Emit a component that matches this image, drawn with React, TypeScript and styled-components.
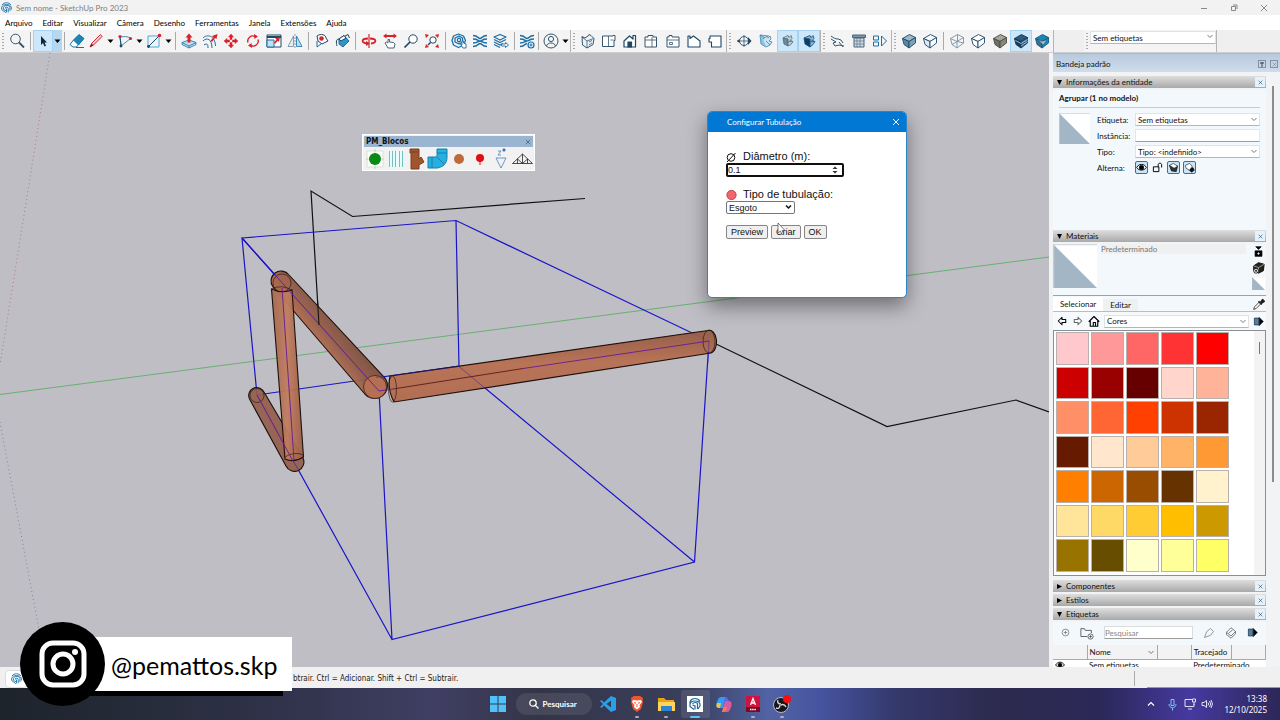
import React from "react";
import styled, { createGlobalStyle, css } from "styled-components";

const UI = `Lato, "Noto Sans", sans-serif`;
const SEGOE = `"Noto Sans", "Open Sans", sans-serif`;
const TAHOMA = `"DejaVu Sans Condensed", "DejaVu Sans", sans-serif`;
const NAVY = "#1f4766";
const BLUE = "#1c6ea4";
const RED = "#d8222a";

const Global = createGlobalStyle`
  * { box-sizing: border-box; }
  body { margin: 0; background: #f0f0f0; }
  button, input, select { font: inherit; color: inherit; margin: 0; padding: 0; }
  svg { display: block; flex: none; }
`;

/* ---------- window frame ---------- */

const Shell = styled.div`
  position: relative;
  display: flex;
  flex-direction: column;
  height: 100vh;
  overflow: hidden;
  font: 8px/12px ${UI};
  color: #111;
`;

const TitleBar = styled.header`
  display: flex;
  align-items: center;
  gap: 4px;
  height: 15px;
  padding: 0 10px 0 1px;
  background: #f2f2f2;
  color: #808080;
`;

const WindowTitle = styled.h1`
  margin: 0;
  flex: 1;
  font-size: 8px;
  font-weight: 400;
`;

const PlainButton = styled.button`
  display: flex;
  align-items: center;
  justify-content: center;
  border: 0;
  background: transparent;
`;

const WindowButtons = styled.div`
  display: flex;
  gap: 18px;
  & > button { width: 12px; height: 14px; }
`;

const MenuBar = styled.nav`
  display: flex;
  align-items: center;
  gap: 10px;
  height: 15px;
  padding-left: 5px;
  background: #fff;
  a { color: #000; text-decoration: none; }
`;

const ToolbarRow = styled.div`
  display: flex;
  height: 23px;
  background: #efefef;
  border-bottom: 1px solid #cfcfcf;
`;

const ToolGroup = styled.div`
  display: flex;
  align-items: center;
  background: #f4f4f4;
  border-right: 1px solid #b4b4b4;
`;

const Grip = styled.div`
  width: 6px;
  height: 18px;
  background: radial-gradient(circle, #a8a8a8 40%, transparent 50%) 2px 0 / 2px 3px repeat-y;
`;

const ToolSet = styled.div<{ $w: number }>`
  display: flex;
  width: ${(p) => p.$w}px;
  height: 22px;
`;

const Tool = styled(PlainButton)<{ $on?: boolean }>`
  flex: 1;
  min-width: 0;
  height: 22px;
  ${(p) => p.$on && css`background: #cce6fa; box-shadow: inset 0 0 0 1px #a6d2f2;`}
`;

const DropTool = styled(PlainButton)<{ $on?: boolean }>`
  width: 9px;
  height: 22px;
  ${(p) => p.$on && css`background: #b5d7f0;`}
`;

const Divider = styled.div`
  width: 1px;
  height: 18px;
  margin: 0 2px;
  background: #a9a9a9;
`;

const ToolbarGap = styled.div`
  width: 30px;
`;

const SelectBox = styled.div<{ $w?: number }>`
  position: relative;
  ${(p) => (p.$w ? `width: ${p.$w}px; align-self: flex-start; padding-top: 1px;` : "flex: 1; min-width: 0;")}
  display: flex;
  svg { position: absolute; right: 2px; top: 3px; pointer-events: none; }
`;

const Select = styled.select`
  appearance: none;
  width: 100%;
  height: 13px;
  && { padding: 0 12px 0 2px; }
  border: 1px solid #e2e2e2;
  border-bottom-color: #b5b5b5;
  border-radius: 0;
  background: #fff;
`;

/* ---------- icons ---------- */

const Ico = ({ children, s = 16, c = NAVY, w = 1 }: { children: React.ReactNode; s?: number; c?: string; w?: number }) => (
  <svg width={s} height={s} viewBox="0 0 16 16" fill="none" stroke={c} strokeWidth={w} strokeLinejoin="round" aria-hidden>
    {children}
  </svg>
);

const Tri = () => (
  <svg width="7" height="5" viewBox="0 0 7 5" aria-hidden><path d="M.5 .5h6L3.500 4z" fill="#000" /></svg>
);
const Chevron = () => (
  <svg width="8" height="7" viewBox="0 0 8 7" fill="none" stroke="#777" aria-hidden><path d="M1.500 2L4 4.500 6.500 2" /></svg>
);
const Cross = ({ c = "#888", s = 8 }: { c?: string; s?: number }) => (
  <svg width={s} height={s} viewBox="0 0 8 8" stroke={c} aria-hidden><path d="M1 1l6 6M7 1L1 7" /></svg>
);
const Logo = ({ s = 11 }: { s?: number }) => (
  <svg width={s} height={s} viewBox="0 0 16 16" fill="none" stroke="#1f78ae" strokeWidth="1.400" aria-hidden>
    <path d="M1.500 4.500c3-4.500 10-4.500 13 0M1 7.500c2-5 12-5 14 0V11M3.500 8c1-4 9-4 9.500 0v5M1 7.500V11l6 4.500M3.500 8v2.500L7.500 13M6 8.500c1-2 4.500-1 4.500 1V15M6 8.500l2 1.500v5" />
  </svg>
);

const Cube = ({ top, left, right, line = NAVY }: { top: string; left: string; right: string; line?: string }) => (
  <Ico c={line} w={0.9}>
    <path d="M1.500 5.500L8.500 1.500l6 3-6.500 4z" fill={top} />
    <path d="M1.500 5.500L8 8.500V15l-5-3.500z" fill={left} />
    <path d="M8 8.500l6.500-4V10L8 15z" fill={right} />
  </Ico>
);

const ICONS: Record<string, React.ReactNode> = {
  search: <Ico c="#35566e"><circle cx="6.500" cy="6" r="4.800" /><path d="M10 9.500l5 5" strokeWidth="1.800" /></Ico>,
  cursor: <Ico><path d="M6 3v9l2-2 1.500 3.500 1.500-.7L9.500 9.500H12z" fill="#12263a" stroke="none" /></Ico>,
  eraser: <Ico><path d="M4.500 7L10 1.500l5 4L9.500 12z" fill="#1c86b8" stroke={BLUE} /><path d="M4.500 7l5 5-2.500 2H4l-3-2.500z" fill="#fff" stroke={BLUE} /><path d="M7 14.500h8" stroke={BLUE} /></Ico>,
  pencil: <Ico><path d="M2 14l2-4 8.500-8.500 1.500 2L5.500 12z" fill="#f3cfcf" stroke={RED} /><path d="M2 14l1.500-3.500 2 2z" fill="#7a1a1a" stroke="none" /></Ico>,
  arc: <Ico><path d="M3 4c5-1 10 0 10.500 1.500L4 13z" stroke={BLUE} strokeWidth=".8" /><path d="M4 13C4 9 3 6 3 4" /><circle cx="3" cy="3.500" r="1.600" fill={RED} stroke="none" /><circle cx="13.500" cy="5.500" r="1.600" fill={RED} stroke="none" /><circle cx="4" cy="13" r="1.400" fill={NAVY} stroke="none" /></Ico>,
  rect: <Ico><path d="M2 3h11v11H2z" fill="#eaf6fc" stroke="#57a6cf" /><path d="M2 14L13 3" /><circle cx="13.500" cy="2.500" r="1.800" fill={RED} stroke="none" /><circle cx="2.500" cy="13.500" r="1.400" fill={NAVY} stroke="none" /></Ico>,
  push: <Ico><path d="M1 9.500L8 7l7 2.500v2L8 15l-7-3.500z" fill="#bfe0f0" stroke={BLUE} strokeWidth=".8" /><path d="M1 9.500L8 13l7-3.500M8 13v2" stroke={BLUE} strokeWidth=".8" /><path d="M8 .5L11.500 4.500H9.500v5h-3v-5h-2z" fill={RED} stroke="none" /></Ico>,
  offset: <Ico><path d="M1 8c4-4 9-2 9 7M1 5c4-4 12-3 12.500 8M2 12c3-2 4-1 4 3" stroke={BLUE} /><path d="M15.500 1l-1 5-1.500-1L10 9 8.500 7.500l3-3L10 3z" fill={RED} stroke="none" /></Ico>,
  move: <Ico><path d="M8 1l2.500 3H9v2.500H7V4H5.500zM8 15l2.500-3H9V9.500H7V12H5.500zM1 8l3-2.500V7h2.500v2H4v1.500zM15 8l-3-2.500V7H9.500v2H12v1.500z" fill={RED} stroke={RED} strokeWidth=".5" /></Ico>,
  rotate: <Ico c={RED} w={1.4}><path d="M3 9.500a5 5 0 0 1 7-6M13 6.500a5 5 0 0 1-7 6" /><path d="M9 1l4 2.500L9.500 6zM7 15l-4-2.500L6.500 10z" fill={RED} stroke="none" /></Ico>,
  scale: <Ico><path d="M1 2h14v12H1z" fill="#fff" /><path d="M1 4h14" strokeWidth="2" /><path d="M1 7h7v7H1z" fill="#bfe3f3" stroke={BLUE} /><path d="M14 4l-1 5-1.300-1.200L9 11 8 9.500l2.500-3L9 5z" fill={RED} stroke="none" /></Ico>,
  flip: <Ico w={0.8}><path d="M6.500 3v10.500H1z" stroke="#70879a" fill="#e6edf2" /><path d="M9.500 3v10.500H15z" stroke={BLUE} fill="#b8dff0" /><path d="M8 1v14" stroke="#70879a" strokeDasharray="2 1" /></Ico>,
  tape: <Ico><path d="M3 3c4-3 9-1 9 2l2 3-6 3-4-3z" fill="#fff" /><circle cx="7.500" cy="5.500" r="2.300" fill={RED} stroke="none" /><path d="M3 8v6l4-3" stroke={BLUE} /></Ico>,
  paint: <Ico><path d="M4 6l5-3.500L14 8l-6 6-4-3z" fill="#2f95c7" stroke={BLUE} /><path d="M4 6l5-3.500L11 5 6 8z" fill="#fff" /><path d="M4 6C1 6 1 9 2 13M10 3l3-1.500L14.500 5" /></Ico>,
  orbit: <Ico c={RED} w={1.8}><path d="M7 5.500C0 5.500 0 10 6 10.500M9 5.500c7 0 7 4.500 1 5" /><path d="M8 1v14" strokeWidth="1.200" /><path d="M5 8l4 2.500L5 13z" fill={RED} stroke="none" /></Ico>,
  pan: <Ico c="#35566e" w={0.9}><path d="M6 15l-3-5 1.500-1L6 10V6.500h1.500V9l4 .5 1.500 1.500-1 4z" fill="#fff" /><path d="M1 3l3.500-2.500V2h7V.5L15 3l-3.500 2.500V4h-7v1.500z" fill={RED} stroke="none" /></Ico>,
  glass: <Ico><circle cx="10" cy="6" r="4.200" fill="#fff" /><path d="M7 9l-5.500 5.500" strokeWidth="1.700" /></Ico>,
  extents: <Ico><circle cx="9" cy="7" r="3.200" fill="#fff" /><path d="M6.500 9.500L4 12" strokeWidth="1.500" /><path d="M1 1l4 1-3 3zM15 1l-1 4-3-3zM15 15l-4-1 3-3zM1 15l1-4 3 3z" fill={RED} stroke="none" /></Ico>,
  ware: <Ico c={BLUE} w={1.3}><path d="M7.500 1l5 2 2 4.500-2 4.500-5 2.500-5-2.500-1.500-4.500 1.500-4.500zM4 5l4-2 3.500 2v4L8 11 4 9zM6.500 6l1.500-1 1.500 1v2L8 9 6.500 8z" /><path d="M11 8v4l-1.500-1L12 15h3v-4l-2.500-1V8z" fill="#fff" strokeWidth=".9" /></Ico>,
  ext: <Ico c={BLUE} w={1.6}><path d="M1 2.500c5 0 5 3 7 3s2-3 7-3M1 6c5 0 5 2 7 2s2-2 7-2M1 13.500c5 0 5-3 7-3s2 3 7 3M1 10c5 0 5-2 7-2s2 2 7 2" /></Ico>,
  layers: <Ico c={BLUE} w={1.3}><path d="M1 4l6-2.500L13 4 7 7zM1 6.500L7 9.500l6-3M1 9L7 12l3-1.500M1 11.500L7 14.500" /><path d="M8.500 11h4V9.500l3 2.500-3 2.500V13h-4z" fill="#fff" strokeWidth=".9" /></Ico>,
  extgear: <Ico c={BLUE} w={1.6}><path d="M1 2.500c5 0 5 3 7 3s2-3 7-3M1 6c5 0 5 2 7 2s2-2 7-2M1 13.500c5 0 5-3 7-3M1 10c5 0 5-2 7-2" /><circle cx="12" cy="12" r="3" fill="#e8f3fa" strokeWidth="1.200" /><circle cx="12" cy="12" r="1" strokeWidth="1" /></Ico>,
  user: <Ico c="#35566e"><circle cx="8" cy="8" r="7" /><circle cx="8" cy="6" r="2.600" /><path d="M3.500 13c1-4 8-4 9 0" /></Ico>,
  iso: <Ico c="#35566e"><path d="M2 3.500l3 1.500 3-2 1-1.500 2 1 3 3-1 6-6 3.500-4.500-3z" fill="#eef3f7" /><path d="M2 4l5 4v7M7 8l6.500-2.500M9 9l3-1.500M9 12l3-2" strokeWidth=".8" /></Ico>,
  plan: <Ico c="#35566e"><path d="M1.500 3h10.500V2.500h2v5h-1v6h-11.500z" fill="#fff" /><path d="M7.500 3v10.500M9.500 7h3" strokeWidth=".8" /></Ico>,
  front: <Ico w={1.2}><path d="M2 14V8l5.500-5L11 6V2.500h2.500V14z" fill="#fff" /><path d="M6 14V9h3.500v5z" fill={NAVY} /></Ico>,
  right: <Ico c="#35566e"><path d="M2 14V4h3V2.500h5V4h3.500v10z" fill="#fff" /><path d="M9 4v10M2 7h11.500" strokeWidth=".8" /></Ico>,
  back: <Ico c="#35566e"><path d="M2 14V4h2V2.500h3V4h7v10z" fill="#fff" /><path d="M2 7h12M4.500 9.500h3v2h-3z" strokeWidth=".8" /></Ico>,
  left: <Ico w={1.1}><path d="M2 14V3h2v2.500L7.500 3 14 8v6z" fill="#fff" /></Ico>,
  bottom: <Ico w={1.1}><path d="M3 3h11v11H4.500V9H2V5.500h1z" fill="#fff" /></Ico>,
  section: <Ico c="#35566e"><circle cx="8" cy="8" r="4.500" /><path d="M1 8h14M8 2v12" strokeWidth=".8" /><path d="M12 4l3.500 4L12 12z" fill={NAVY} stroke="none" /><path d="M3.500 6L1 8l2.500 2z" fill={NAVY} stroke="none" /></Ico>,
  secA: <Ico c="#3e86b0" w={0.8}><path d="M2 2l6 3v9l-5-3z" fill="#8fc3dd" /><path d="M5 6l4-3 1 2 2-2 1 3-2 2 3 1-2 3-4 2" fill="#c9e3f0" /><path d="M2 2l9 1M8 8l4 4" /></Ico>,
  secB: <Ico c="#4d6b7e" w={0.8}><path d="M4 5l5 1v7l-4-2z" fill="#6f8797" /><path d="M4 5l5-2.500 1 2 2-2 1 3-2 2 3 1-2 3-3 1.500V6z" fill="#c2cfd7" /><path d="M9 9l4-1" /></Ico>,
  secC: <Ico c="#0f4a73" w={0.8}><path d="M3 5l6 1v8l-5-3z" fill="#0b3f66" /><path d="M3 5l6-2.500 1 2 2-2 1 3-2 2 3 1-2 3-3 2.500V6z" fill="#8ab6d2" /><path d="M9 9l4-1" /></Ico>,
  hand: <Ico c="#35566e"><path d="M1 3c3 2 4 3 7 3l3 1 2 3M1 6l5 3-3 1 2 3 4-1 5 1M9 9l4 5" /></Ico>,
  panel: <Ico c="#4b667b"><path d="M3 5h10v9H3z" fill="#cfdae2" /><path d="M1.500 2h13v2.500h-13z" fill="#7d95a8" /><path d="M6 5v9M9 5v9M3 8h10M3 11h10" strokeWidth=".6" /></Ico>,
  blocks: <Ico c={BLUE}><path d="M1.500 3h5v4h-5zM1.500 9h5v4h-5zM9.500 3L14.500 8l-5 5z" /></Ico>,
  xray: <Cube top="#9db8c9" left="#5f87a3" right="#7ba0b8" />,
  backedge: <Cube top="#f4f8fa" left="#dfe9ef" right="#fff" />,
  wire: <Ico c="#6c879c" w={0.8}><path d="M1.500 5.500L8.500 1.500l6 3-6.500 4zM1.500 5.500l1.500 6L8 15V8.500M14.500 4.500V10L8 15M8.500 1.500v7L3 11.500M8.500 8.500L14.500 10" /></Ico>,
  hidden: <Cube top="#fff" left="#fff" right="#fff" />,
  shaded: <Cube top="#a7a69a" left="#6f6f66" right="#87867b" line="#4a4a44" />,
  textured: <Ico c="#173a57" w={0.9}><path d="M1.500 5.500L8.500 1.500l6 3-6.500 4z" fill="#2b5c80" /><path d="M1.500 5.500L8 8.500V15l-5-3.500z" fill="#173a57" /><path d="M8 8.500l6.500-4V10L8 15z" fill="#2b5c80" /><path d="M2.500 7.500L8 10.500l6.500-4M8 13l6.500-4.500" stroke="#b6d8ec" strokeWidth=".8" /></Ico>,
  mono: <Ico c="#155a80" w={0.9}><path d="M1.500 5.500L8.500 1.500l6 3-6.500 4z" fill="#1c86b8" /><path d="M1.500 5.500L8 8.500V15l-5-3.500z" fill="#3a6f8f" /><path d="M8 8.500l6.500-4V10L8 15z" fill="#1c86b8" /><path d="M5 7l3 1.500 4-1-3 4z" fill="#d9b98a" stroke="none" /></Ico>,
};

type ToolId = [string, string, boolean?];
const Tools = ({ w, items }: { w: number; items: ToolId[] }) => (
  <ToolSet $w={w}>
    {items.map(([id, label, on]) => (
      <Tool key={id} $on={on} aria-label={label}>{ICONS[id]}</Tool>
    ))}
  </ToolSet>
);
const ToolWithDrop = ({ id, label, on }: { id: string; label: string; on?: boolean }) => (
  <ToolSet $w={29}>
    <Tool $on={on} aria-label={label}>{ICONS[id]}</Tool>
    <DropTool $on={on} aria-label={`${label}: opções`}><Tri /></DropTool>
  </ToolSet>
);

/* ---------- drawing area ---------- */

const Main = styled.main`
  flex: 1;
  min-height: 0;
  display: flex;
`;

const Viewport = styled.section`
  position: relative;
  flex: 1;
  min-width: 0;
  overflow: hidden;
  background: #bfbec5;
  & > svg { width: 100%; height: 100%; }
`;

const Scene = () => (
  <svg viewBox="0 53 1049 614" preserveAspectRatio="xMinYMin slice" fill="none" aria-label="Modelo 3D">
    <defs>
      <linearGradient id="long" x1="0" y1="0" x2=".08" y2="1">
        <stop offset="0" stopColor="#8c5540" /><stop offset=".5" stopColor="#b87052" /><stop offset="1" stopColor="#b06a4c" />
      </linearGradient>
      <linearGradient id="post" x1="0" y1="0" x2="1" y2="0">
        <stop offset="0" stopColor="#a4684f" /><stop offset=".5" stopColor="#c07c5e" /><stop offset="1" stopColor="#9b5d44" />
      </linearGradient>
      <linearGradient id="slope" gradientUnits="userSpaceOnUse" x1="318" y1="340" x2="337" y2="325">
        <stop offset="0" stopColor="#b0694c" /><stop offset=".5" stopColor="#915c49" /><stop offset="1" stopColor="#82503f" />
      </linearGradient>
    </defs>
    <path d="M50 53L0 365" stroke="#b07884" strokeDasharray="1 3" />
    <path d="M0 422L46 667" stroke="#8080a8" strokeDasharray="1 3" />
    <path d="M0 394.500L1049 257" stroke="#5fae68" strokeWidth=".9" />
    <path d="M319 325L311 191l41.500 25.500L585 198.500M714 343l173 83.500L1016 400l33 12" stroke="#111" strokeWidth="1.200" />
    <g stroke="#1a14c8" strokeWidth="1.200">
      <path d="M242 238l214-17.500L709 341 694.500 562 392 639.500 379 391zM456 220.500l3 146L694.500 562M242 238l15 157L392 639.500M257 395l202-29" />
    </g>
    <g stroke="#1c100c" strokeWidth="1.100">
      <path d="M249.500 399l36.500 67a8.500 8.500 0 0 0 17-8l-39-66a8 8 0 0 0-14.500 7z" fill="#925d4b" fillOpacity=".92" />
      <circle cx="257" cy="395.500" r="7" strokeWidth=".6" />
      <path d="M273 287l91 106a12 12 0 0 0 21-15L289 275a9.500 9.500 0 0 0-16 12z" fill="url(#slope)" fillOpacity=".94" />
      <circle cx="375" cy="387" r="11.500" fill="#b56f52" strokeWidth=".6" />
      <circle cx="282" cy="283" r="9" fill="#a5664c" fillOpacity=".6" strokeWidth=".6" />
      <path d="M271.500 289L285 459q9 4 18.500-2L292 290q-10 4-20.500-1z" fill="url(#post)" fillOpacity=".94" />
      <path d="M285 457q9-6 18.500-2M271.500 289q10-5 20.500 1" strokeWidth=".6" />
      <path d="M390 376l318-45.500a7 11.500 0 0 1 3 22.500L394 402q-7-13-4-26z" fill="url(#long)" fillOpacity=".95" />
      <ellipse cx="392.500" cy="389" rx="4" ry="13" strokeWidth=".6" />
      <ellipse cx="709" cy="341.500" rx="6" ry="11.500" strokeWidth=".6" />
      <path d="M393 389l130-20.500" stroke="#5b1a14" strokeWidth=".9" />
    </g>
    <path d="M523 368.500L709 341M242 238l137 153 14-2M257 395l36 66M282 288l12 172" stroke="#6a1a96" strokeWidth=".9" />
    <path d="M242 238l33 37" stroke="#1a14c8" strokeWidth="1.200" />
    <path d="M317.500 300l1.500 25" stroke="#111" />
    <path d="M376 377.500l83-11 72 60M293 461l5 8M709 341l-1 22" stroke="#2018c0" strokeWidth=".8" opacity=".5" />
  </svg>
);

/* floating block palette */

const Palette = styled.aside`
  position: absolute;
  left: 362px;
  top: 81px;
  width: 173px;
  height: 37px;
  padding: 1px;
  background: #f2f2f2;
  border: 1px solid #fff;
`;
const PaletteTitle = styled.div`
  display: flex;
  align-items: center;
  justify-content: space-between;
  height: 11px;
  padding: 0 2px;
  background: #9bb4cf;
  font: bold 8px/11px ${TAHOMA};
`;
const PaletteTools = styled.div`
  display: flex;
  height: 23px;
  & > button { flex: 1; min-width: 0; }
`;

/* pipe dialog */

const Dialog = styled.section`
  position: absolute;
  left: 707px;
  top: 58px;
  width: 200px;
  height: 187px;
  border: 1px solid #2a86c8;
  border-radius: 5px;
  overflow: hidden;
  background: #fff;
  box-shadow: 0 8px 20px rgba(0, 0, 0, 0.42);
`;
const DialogBar = styled.div`
  display: flex;
  align-items: center;
  height: 20px;
  padding: 0 6px 0 19px;
  background: #0078d4;
  color: #fff;
  h2 { flex: 1; margin: 0; font: 400 8px/12px ${UI}; }
`;
const Form = styled.form`
  display: flex;
  flex-direction: column;
  align-items: flex-start;
  padding: 18px;
  font: 11px/13px "Liberation Sans", Arial, sans-serif;
`;
const FieldLabel = styled.label`
  display: flex;
  align-items: center;
  gap: 6px;
`;
const NumberBox = styled.div`
  display: flex;
  align-items: center;
  width: 118px;
  height: 14px;
  margin-bottom: 11px;
  padding-right: 4px;
  border: 2px solid #101010;
  border-radius: 2px;
  input {
    flex: 1;
    min-width: 0;
    border: 0;
    outline: 0;
    background: transparent;
    font-size: 9px;
    line-height: 10px;
    appearance: textfield;
  }
  input::-webkit-inner-spin-button { display: none; }
`;
const KindBox = styled.div`
  position: relative;
  width: 69px;
  height: 13px;
  margin-bottom: 11px;
  select {
    appearance: none;
    display: block;
    width: 100%;
    height: 13px;
    padding: 0 2px;
    border: 1px solid #767676;
    border-radius: 2px;
    background: #fff;
    font-size: 9px;
    line-height: 10px;
  }
  svg { position: absolute; right: 3px; top: 3px; pointer-events: none; }
`;
const Actions = styled.div`
  display: flex;
  gap: 3px;
`;
const FormButton = styled.button`
  height: 14px;
  && { padding: 0 4px; }
  border: 1px solid #868686;
  border-radius: 2px;
  background: #efefef;
  font-size: 9px;
  line-height: 11px;
`;
const Pointer = styled.svg`
  position: absolute;
  left: 69px;
  top: 110px;
`;

/* ---------- tray ---------- */

const Tray = styled.aside`
  width: 231px;
  display: flex;
  flex-direction: column;
  padding-left: 4px;
  background: #f2f3f5;
  line-height: 10px;
  overflow: hidden;
`;
const TrayHeader = styled.div`
  display: flex;
  align-items: center;
  gap: 4px;
  height: 19px;
  padding: 2px 2px 0 3px;
  background: linear-gradient(#b7cade, #cfdceb);
  border-top: 1px solid #a9b8c8;
  span { flex: 1; }
`;
const SmallBox = styled(PlainButton)`
  width: 8px;
  height: 8px;
  border: 1px solid #8492a2;
`;
const TrayBody = styled.div`
  flex: 1;
  min-height: 0;
  display: flex;
  gap: 6px;
  padding-top: 4px;
`;
const Panels = styled.div`
  flex: 1;
  min-width: 0;
  overflow: hidden;
`;
const ScrollRail = styled.div`
  width: 8px;
  padding-top: 10px;
  &::before {
    content: "";
    display: block;
    width: 2px;
    height: 396px;
    background: #8c8c8c;
  }
`;
const PanelHead = styled.div`
  display: flex;
  align-items: center;
  height: 12px;
  margin-bottom: 2px;
  padding: 0 1px 0 4px;
  gap: 4px;
  background: linear-gradient(#dedede, #a9a9a9);
  h3 { flex: 1; margin: 0; font: 400 8px/12px ${UI}; }
  button { width: 10px; height: 10px; background: #e6f2fb; }
`;
const InfoBody = styled.div`
  height: 140px;
  padding: 2px 6px 0;
  background: #f3f8fc;
`;
const EntityTitle = styled.h4`
  margin: 0 0 5px;
  padding-bottom: 2px;
  border-bottom: 1px solid #c8ccd0;
  font: bold 8px/13px ${UI};
`;
const InfoRow = styled.div`
  display: flex;
  gap: 7px;
`;
const Fields = styled.div`
  flex: 1;
  min-width: 0;
  display: flex;
  flex-direction: column;
  gap: 3px;
`;
const Field = styled.div`
  display: flex;
  align-items: center;
  & > label, & > span { width: 38px; }
`;
const TextInput = styled.input`
  flex: 1;
  min-width: 0;
  height: 13px;
  border: 1px solid #e6e6e6;
  border-bottom-color: #9d9d9d;
  background: #fff;
`;
const Toggles = styled.div`
  display: flex;
  gap: 3px;
`;
const Toggle = styled(PlainButton)<{ $on?: boolean }>`
  width: 13px;
  height: 13px;
  ${(p) => p.$on && css`background: #cde6f7; border: 1px solid #30739e; border-radius: 2px;`}
`;
const MaterialTop = styled.div`
  display: flex;
  height: 52px;
  gap: 4px;
  background: #f3f8fc;
  border-bottom: 1px solid #9ea3a8;
`;
const MaterialName = styled.input`
  flex: 1;
  min-width: 0;
  height: 10px;
  border: 0;
  background: #f0f0f0;
  && { color: #777; }
`;
const MaterialTools = styled.div`
  display: flex;
  flex-direction: column;
  width: 16px;
  gap: 2px;
  & > button { height: 14px; }
`;
const TabRow = styled.div`
  display: flex;
  align-items: flex-end;
  height: 16px;
  padding-right: 1px;
  background: #f3f8fc;
  border-bottom: 1px solid #b9bdc2;
  & > span { flex: 1; }
`;
const Tab = styled.button<{ $on?: boolean }>`
  height: ${(p) => (p.$on ? 14 : 12)}px;
  && { padding: 0 7px; }
  border: 0;
  background: ${(p) => (p.$on ? "#fff" : "#eef0f2")};
`;
const NavRow = styled.div`
  display: flex;
  align-items: center;
  gap: 4px;
  height: 18px;
  padding: 0 2px 0 3px;
  background: #f6fafd;
`;
const SwatchList = styled.div`
  display: grid;
  grid-template-columns: repeat(5, 35px);
  grid-template-rows: repeat(7, 1fr);
  height: 246px;
  padding: 1px 0 1px 2px;
  margin-bottom: 4px;
  border: 1px solid #8a8f95;
  background:
    linear-gradient(#777, #777) 205px 11px / 1px 12px no-repeat,
    linear-gradient(90deg, transparent 200px, #f3f3f3 200px);
  background-color: #fff;
`;
const Swatch = styled.button<{ $c: string }>`
  width: 33px;
  border: 1px solid #b9b1ad;
  && { margin-bottom: 2px; }
  background: ${(p) => p.$c};
`;
const TagTools = styled.div`
  display: flex;
  align-items: center;
  height: 23px;
  padding: 0 8px 2px;
  gap: 10px;
  background: #f3f8fc;
`;
const TagSearch = styled.input`
  flex: 1;
  min-width: 0;
  height: 13px;
  border: 1px solid #dcdcdc;
  border-bottom-color: #9c9c9c;
  background: #fff;
  &::placeholder { color: #888; }
`;
const TagTable = styled.table`
  width: 100%;
  border-collapse: collapse;
  table-layout: fixed;
  background: #fff;
  text-align: left;
  th {
    height: 14px;
    padding: 0 2px;
    background: #f3f3f3;
    border-right: 1px solid #a9a9a9;
    border-bottom: 1px solid #a9a9a9;
    font-weight: 400;
    svg { float: right; margin-top: 2px; }
  }
  td { padding: 0 2px; height: 10px; white-space: nowrap; }
`;

const COLORS = [
  "#ffc8cd", "#ff9899", "#ff6666", "#ff3333", "#ff0000",
  "#cc0000", "#990000", "#660000", "#ffd5cc", "#ffb399",
  "#ff8f66", "#ff6633", "#ff4000", "#cc3300", "#992600",
  "#661a00", "#ffe6cc", "#ffcc99", "#ffb366", "#ff9933",
  "#ff8000", "#cc6600", "#994d00", "#663300", "#fff2cc",
  "#ffe599", "#ffd966", "#ffcc33", "#ffbf00", "#cc9900",
  "#997300", "#664d00", "#ffffcc", "#ffff99", "#ffff66",
];

const Sample = ({ s }: { s: number }) => (
  <svg width={s} height={s} viewBox="0 0 30 30" aria-hidden>
    <path d="M0 0h30v30H0z" fill="#fff" /><path d="M0 0l30 30H0z" fill="#a3b6c5" />
    <path d="M.5 30V.5H30" fill="none" stroke="#c8d0d6" strokeWidth=".7" />
  </svg>
);
const Fold = ({ open }: { open?: boolean }) => (
  <svg width="5" height="5" viewBox="0 0 6 6" aria-hidden><path d={open ? "M0 0h6L3 6z" : "M0 0l6 3-6 3z"} fill="#000" /></svg>
);
const Head = ({ title, open }: { title: string; open?: boolean }) => (
  <PanelHead>
    <Fold open={open} />
    <h3>{title}</h3>
    <PlainButton aria-label={`Fechar ${title}`}><Cross c="#2a4866" s={5} /></PlainButton>
  </PanelHead>
);
const Details = () => (
  <Ico s={11} c="#102a44"><path d="M2 3h7v10H2z" fill="#5b7c98" /><path d="M9 2l6 6-6 6z" fill="#000" /></Ico>
);

/* ---------- status and task bars ---------- */

const StatusBar = styled.footer`
  display: flex;
  align-items: center;
  gap: 266px;
  height: 21px;
  padding: 2px 0 0 5px;
  background: #f0f0f0;
  font: 8px/12px ${TAHOMA};
  color: #222;
  & > span { flex: 1; }
`;
const StatusButton = styled(PlainButton)`
  width: 22px;
  height: 18px;
  border: 1px solid #dcdcdc;
  border-radius: 4px;
  background: #fff;
`;
const MeasureBox = styled.div`
  width: 146px;
  height: 15px;
  border-left: 1px solid #aaa;
  padding-left: 12px;
  &::after {
    content: "";
    display: block;
    height: 16px;
    border-bottom: 1px solid #999;
  }
`;
const TaskBar = styled.footer`
  display: grid;
  grid-template-columns: 1fr auto 1fr;
  align-items: center;
  height: 32px;
  background: linear-gradient(90deg, #1d242c 0, #252b38 10%, #30334b 22%, #403f63 34%, #343548 42%, #3a3f5c 54%, #5263a4 60%, #4654a0 64%, #34386b 70%, #2c2a4e 78%, #2b2858 86%, #4639a0 93%, #2c2758 100%);
  color: #fff;
`;
const Apps = styled.div`
  grid-column: 2;
  display: flex;
  align-items: center;
  height: 30px;
`;
const AppButton = styled(PlainButton)<{ $run?: boolean; $active?: boolean }>`
  position: relative;
  width: 29px;
  height: 28px;
  ${(p) => p.$active && css`background: rgba(255, 255, 255, 0.1); border-radius: 3px;`}
  ${(p) => p.$run && css`
    &::after {
      content: "";
      position: absolute;
      bottom: 0;
      width: ${p.$active ? 10 : 4}px;
      height: 2px;
      border-radius: 1px;
      background: ${p.$active ? "#63c0f5" : "#a9adc4"};
    }
  `}
`;
const SearchPill = styled.button`
  display: flex;
  align-items: center;
  gap: 4px;
  width: 76px;
  height: 22px;
  && { padding: 0 13px; margin: 0 2px 0 3px; }
  border: 0;
  border-radius: 11px;
  background: rgba(255, 255, 255, 0.09);
  font: 700 8px/12px ${UI};
  && { color: #fff; }
`;
const SysTray = styled.div`
  grid-column: 3;
  display: flex;
  align-items: center;
  justify-content: flex-end;
  padding-right: 13px;
  gap: 5px;
  & > time { margin-left: 6px; }
`;
const Clock = styled.time`
  text-align: right;
  font: 8px/11px ${SEGOE};
`;

/* social handle laid over the bottom-left corner */

const Handle = styled.a`
  position: absolute;
  left: 20px;
  bottom: 14px;
  display: flex;
  align-items: center;
  height: 84px;
  color: #000;
  text-decoration: none;
`;
const HandleBadge = styled.span`
  display: flex;
  align-items: center;
  justify-content: center;
  width: 85px;
  height: 84px;
  border-radius: 50%;
  background: #000;
  z-index: 1;
`;
const HandleName = styled.span`
  width: 230px;
  height: 54px;
  margin-left: -43px;
  padding-left: 49px;
  background: #fff;
  box-shadow: -9px 5px 0 #000;
  font: 25px/56px Lato, sans-serif;
`;

export default function App() {
  return (
    <Shell>
      <Global />
      <TitleBar>
        <Logo />
        <WindowTitle>Sem nome - SketchUp Pro 2023</WindowTitle>
        <WindowButtons>
          <PlainButton aria-label="Minimizar"><svg width="8" height="8" stroke="#888"><path d="M1 4.500h6" /></svg></PlainButton>
          <PlainButton aria-label="Restaurar"><svg width="8" height="8" fill="none" stroke="#888"><path d="M1.500 2.500h4v4h-4zM3 1h4v4" /></svg></PlainButton>
          <PlainButton aria-label="Fechar"><Cross /></PlainButton>
        </WindowButtons>
      </TitleBar>
      <MenuBar>
        {["Arquivo", "Editar", "Visualizar", "Câmera", "Desenho", "Ferramentas", "Janela", "Extensões", "Ajuda"].map((m) => (
          <a href="#" key={m}>{m}</a>
        ))}
      </MenuBar>
      <ToolbarRow>
        <ToolGroup>
          <Grip />
          <Tools w={22} items={[["search", "Pesquisar"]]} />
          <Divider />
          <ToolWithDrop id="cursor" label="Selecionar" on />
          <Divider />
          <Tools w={19} items={[["eraser", "Borracha"]]} />
          <ToolWithDrop id="pencil" label="Linha" />
          <ToolWithDrop id="arc" label="Arco" />
          <ToolWithDrop id="rect" label="Retângulo" />
          <Divider />
          <Tools w={128} items={[["push", "Empurrar/Puxar"], ["offset", "Equidistância"], ["move", "Mover"], ["rotate", "Rotar"], ["scale", "Escala"], ["flip", "Inverter"]]} />
          <Divider />
          <Tools w={42} items={[["tape", "Fita métrica"], ["paint", "Pintura"]]} />
          <Divider />
          <Tools w={85} items={[["orbit", "Orbitar"], ["pan", "Panorâmica"], ["glass", "Zoom"], ["extents", "Modelo centralizado"]]} />
          <Divider />
          <Tools w={64} items={[["ware", "3D Warehouse"], ["ext", "Extension Warehouse"], ["layers", "LayOut"]]} />
          <Divider />
          <Tools w={19} items={[["extgear", "Gerenciador de extensões"]]} />
          <Divider />
          <ToolWithDrop id="user" label="Conta" />
        </ToolGroup>
        <ToolGroup>
          <Grip />
          <Tools w={149} items={[["iso", "Iso"], ["plan", "Planta"], ["front", "Frente"], ["right", "Direita"], ["back", "Atrás"], ["left", "Esquerda"], ["bottom", "Inferior"]]} />
        </ToolGroup>
        <ToolGroup>
          <Grip />
          <Tools w={87} items={[["section", "Plano de seção"], ["secA", "Exibir planos"], ["secB", "Exibir cortes", true], ["secC", "Preencher cortes", true]]} />
        </ToolGroup>
        <ToolGroup>
          <Grip />
          <Tools w={64} items={[["hand", "Interagir"], ["panel", "Opções"], ["blocks", "Atributos"]]} />
        </ToolGroup>
        <ToolGroup>
          <Grip />
          <Tools w={43} items={[["xray", "Raio X"], ["backedge", "Arestas posteriores"]]} />
          <Divider />
          <Tools w={107} items={[["wire", "Aramado"], ["hidden", "Linhas ocultas"], ["shaded", "Sombreado"], ["textured", "Texturas", true], ["mono", "Monocromático"]]} />
        </ToolGroup>
        <ToolbarGap />
        <ToolGroup>
          <Grip />
          <SelectBox $w={126}>
            <Select aria-label="Etiqueta ativa"><option>Sem etiquetas</option></Select>
            <Chevron />
          </SelectBox>
        </ToolGroup>
      </ToolbarRow>

      <Main>
        <Viewport>
          <Scene />
          <Palette>
            <PaletteTitle>PM_Blocos<Cross c="#3c5878" s={6} /></PaletteTitle>
            <PaletteTools>
              <PlainButton aria-label="Ponto verde"><svg width="18" height="20" viewBox="0 0 18 20"><path d="M1 2h16v16H1z" fill="#fff" stroke="#d7e0d5" /><path d="M9 0v20M0 10h18" stroke="#9fcb9f" strokeWidth=".6" /><circle cx="9" cy="10" r="6" fill="#0a8a14" /></svg></PlainButton>
              <PlainButton aria-label="Tubos"><svg width="16" height="18" fill="none" stroke="#6fc2c0"><path d="M1 1h14v16H1z" fill="#e9fbfb" stroke="none" /><path d="M1.500 1v16M4.500 1v16M7.500 1v16M11.500 1v16M14.500 1v16" /></svg></PlainButton>
              <PlainButton aria-label="Junção"><svg width="17" height="22" viewBox="0 0 17 22"><path d="M2 1h9v10l2-2 3 5-5 3v4H3V5H2z" fill="#a0552f" stroke="#7b3f21" /><path d="M3 4h7" stroke="#7b3f21" /></svg></PlainButton>
              <PlainButton aria-label="Joelho"><svg width="21" height="22" viewBox="0 0 21 22"><path d="M10 1h10v8c0 7-4 10-10 11H1V9h7c2 0 2-1 2-3z" fill="#27afe0" stroke="#1780ad" /><path d="M10 5h10M5 9v11M10 9l7 7" stroke="#1780ad" /></svg></PlainButton>
              <PlainButton aria-label="Ralo"><svg width="12" height="20"><circle cx="6" cy="10" r="5" fill="#bd6a3c" /></svg></PlainButton>
              <PlainButton aria-label="Registro"><svg width="12" height="20"><circle cx="6" cy="9" r="4" fill="#e20d12" /><path d="M6 10v6" stroke="#e20d12" /></svg></PlainButton>
              <PlainButton aria-label="Nível"><svg width="14" height="22" viewBox="0 0 14 22" fill="none" stroke="#4a80b8"><path d="M2 10h10L7 20zM4 3h3L4 7h3" strokeWidth=".8" /><path d="M9 1h2v2H9z" fill="#2b62a5" /></svg></PlainButton>
              <PlainButton aria-label="Treliça"><svg width="21" height="20" viewBox="0 0 21 20" fill="none" stroke="#222"><path d="M.5 14.500h20L10.500 5zM10.500 5v9.500M5.500 10l5 4.500 5-4.500M5.500 10v4.500M15.500 10v4.500" strokeWidth=".8" /></svg></PlainButton>
            </PaletteTools>
          </Palette>

          <Dialog aria-label="Configurar Tubulação">
            <DialogBar>
              <h2>Configurar Tubulação</h2>
              <PlainButton aria-label="Fechar"><Cross c="#fff" s={8} /></PlainButton>
            </DialogBar>
            <Form onSubmit={(e) => e.preventDefault()}>
              <FieldLabel htmlFor="diam">
                <svg width="11" height="11" viewBox="0 0 11 11" fill="none" stroke="#111"><circle cx="5" cy="6.500" r="3.800" /><path d="M1 11L9.500 2" /></svg>
                Diâmetro (m):
              </FieldLabel>
              <NumberBox>
                <input id="diam" type="number" step="0.1" defaultValue="0.1" />
                <svg width="6" height="8" fill="#333"><path d="M.5 3L3 .5 5.500 3zM.5 5h5L3 7.500z" /></svg>
              </NumberBox>
              <FieldLabel htmlFor="kind">
                <svg width="11" height="11" viewBox="0 0 11 11"><circle cx="5.500" cy="6" r="4.600" fill="#f2676c" stroke="#b8454a" /></svg>
                Tipo de tubulação:
              </FieldLabel>
              <KindBox>
                <select id="kind"><option>Esgoto</option></select>
                <svg width="7" height="6" fill="none" stroke="#111" strokeWidth="1.500"><path d="M1 1.500l2.500 2.500L6 1.500" /></svg>
              </KindBox>
              <Actions>
                <FormButton type="button">Preview</FormButton>
                <FormButton type="button">Criar</FormButton>
                <FormButton type="button">OK</FormButton>
              </Actions>
            </Form>
            <Pointer width="9" height="14" viewBox="0 0 9 14"><path d="M1 1v10l2.500-2 1.500 3.500 1.500-.7L5.200 8.500H8z" fill="#fff" stroke="#555" strokeWidth=".8" /></Pointer>
          </Dialog>
        </Viewport>

        <Tray>
          <TrayHeader>
            <span>Bandeja padrão</span>
            <SmallBox aria-label="Fixar"><svg width="4" height="5" stroke="#34465a"><path d="M2 0v5M0 1h4" /></svg></SmallBox>
            <SmallBox aria-label="Fechar bandeja"><Cross c="#7b8896" s={5} /></SmallBox>
          </TrayHeader>
          <TrayBody>
            <Panels>
              <Head title="Informações da entidade" open />
              <InfoBody>
                <EntityTitle>Agrupar (1 no modelo)</EntityTitle>
                <InfoRow>
                  <Sample s={31} />
                  <Fields>
                    <Field><label htmlFor="tag">Etiqueta:</label><SelectBox><Select id="tag"><option>Sem etiquetas</option></Select><Chevron /></SelectBox></Field>
                    <Field><label htmlFor="inst">Instância:</label><TextInput id="inst" /></Field>
                    <Field><label htmlFor="type">Tipo:</label><SelectBox><Select id="type"><option>Tipo: &lt;indefinido&gt;</option></Select><Chevron /></SelectBox></Field>
                    <Field>
                      <span>Alterna:</span>
                      <Toggles>
                        <Toggle $on aria-label="Visível"><Ico s={11} c="#000" w={1.4}><path d="M1 8c3-6 11-6 14 0-3 5-11 5-14 0z" fill="#fff" /><circle cx="8" cy="8" r="3" fill="#000" /></Ico></Toggle>
                        <Toggle aria-label="Bloqueado"><Ico s={11} c="#000" w={1.4}><path d="M2 7h8v7H2zM9 7V4c0-3 5-3 5 0v4" /></Ico></Toggle>
                        <Toggle $on aria-label="Receber sombras"><Ico s={11} c="#000" w={0.8}><path d="M2 5l3 8 7 1 2-8z" fill="#333" /><path d="M2 5l6-3 6 4-5 3z" fill="#fff" /></Ico></Toggle>
                        <Toggle $on aria-label="Projetar sombras"><Ico s={11} c="#000" w={0.8}><path d="M7 11l6-3 2 4-4 3z" fill="#111" /><path d="M2 5l6-3 4 4-4 6-5-3z" fill="#fff" /></Ico></Toggle>
                      </Toggles>
                    </Field>
                  </Fields>
                </InfoRow>
              </InfoBody>

              <Head title="Materiais" open />
              <MaterialTop>
                <Sample s={44} />
                <MaterialName aria-label="Nome do material" defaultValue="Predeterminado" />
                <MaterialTools>
                  <PlainButton aria-label="Painel secundário"><Ico s={11} c="#000"><path d="M4 1h8L8 5z" fill="#000" /><path d="M3 7h10v8H3z" fill="#000" /><path d="M6 11h4M8 9v4" stroke="#fff" /></Ico></PlainButton>
                  <PlainButton aria-label="Criar material"><Ico s={13} c="#000"><path d="M2 6l6-4 7 2-1 8-6 3-6-4z" fill="#222" /><path d="M2 6l6 2 7-4M8 8v6" stroke="#b9b79a" /><circle cx="5" cy="12" r="3" fill="#fff" /><path d="M3.500 12h3M5 10.500v3" /></Ico></PlainButton>
                  <PlainButton aria-label="Predeterminado"><Sample s={13} /></PlainButton>
                </MaterialTools>
              </MaterialTop>
              <TabRow role="tablist">
                <Tab role="tab" $on>Selecionar</Tab>
                <Tab role="tab">Editar</Tab>
                <span />
                <PlainButton aria-label="Conta-gotas"><Ico s={13} c="#222"><path d="M2 14l1-3 6-6 2 2-6 6z" fill="#fff" /><path d="M8 4l4 4M10 6l3-4 2 2-4 3z" fill="#000" strokeWidth="2" /></Ico></PlainButton>
              </TabRow>
              <NavRow>
                <PlainButton aria-label="Voltar"><Ico s={12} c="#000" w={1.4}><path d="M3 8l5-5v3h5v4H8v3z" /></Ico></PlainButton>
                <PlainButton aria-label="Avançar"><Ico s={12} c="#666" w={1.4}><path d="M13 8L8 3v3H3v4h5v3z" /></Ico></PlainButton>
                <PlainButton aria-label="No modelo"><Ico s={12} c="#000" w={1.5}><path d="M1 9l7-7 7 7M3 8v7h10V8M7 15v-5h3v5" /></Ico></PlainButton>
                <SelectBox><Select aria-label="Biblioteca"><option>Cores</option></Select><Chevron /></SelectBox>
                <PlainButton aria-label="Detalhes"><Details /></PlainButton>
              </NavRow>
              <SwatchList>
                {COLORS.map((c) => <Swatch key={c} $c={c} aria-label={c} />)}
              </SwatchList>

              <Head title="Componentes" />
              <Head title="Estilos" />
              <Head title="Etiquetas" open />
              <TagTools>
                <PlainButton aria-label="Adicionar etiqueta"><Ico s={9} c="#777" w={1.4}><circle cx="8" cy="8" r="6" /><path d="M5 8h6M8 5v6" /></Ico></PlainButton>
                <PlainButton aria-label="Adicionar pasta"><Ico s={14} c="#555"><path d="M8 12H1V3h4l1 2h7v3" /><circle cx="12" cy="12" r="3" /><path d="M10.500 12h3M12 10.500v3" /></Ico></PlainButton>
                <TagSearch aria-label="Pesquisar etiquetas" placeholder="Pesquisar" />
                <PlainButton aria-label="Etiquetar"><Ico s={12} c="#777"><path d="M2 14l3-8 5-4 4 4-4 5z" /></Ico></PlainButton>
                <PlainButton aria-label="Cor por etiqueta"><Ico s={12} c="#555"><path d="M2 7l6-6 6 5v3l-6 6-6-5zM2 7l6 5 6-6M5 8l5-4" /></Ico></PlainButton>
                <PlainButton aria-label="Detalhes"><Details /></PlainButton>
              </TagTools>
              <TagTable>
                <colgroup><col style={{ width: "16%" }} /><col style={{ width: "33%" }} /><col style={{ width: "16%" }} /><col style={{ width: "19%" }} /><col style={{ width: "16%" }} /></colgroup>
                <thead><tr><th aria-label="Visível" /><th>Nome<Chevron /></th><th aria-label="Cor" /><th>Tracejado</th><th aria-label="Editar" /></tr></thead>
                <tbody><tr>
                  <td><Ico s={10} c="#000" w={1.4}><path d="M1 8c3-6 11-6 14 0-3 5-11 5-14 0z" /><circle cx="8" cy="8" r="3" fill="#000" /></Ico></td>
                  <td>Sem etiquetas</td><td /><td colSpan={2}>Predeterminado</td>
                </tr></tbody>
              </TagTable>
            </Panels>
            <ScrollRail />
          </TrayBody>
        </Tray>
      </Main>

      <StatusBar>
        <StatusButton aria-label="Ajuda contextual"><Logo /></StatusButton>
        <span>btrair. Ctrl = Adicionar. Shift + Ctrl = Subtrair.</span>
        <MeasureBox />
      </StatusBar>

      <TaskBar>
        <Apps>
          <AppButton aria-label="Iniciar"><svg width="16" height="16" fill="#4fc3f7"><path d="M0 0h7.500v7.500H0zM8.500 0H16v7.500H8.500zM0 8.500h7.500V16H0zM8.500 8.500H16V16H8.500z" /></svg></AppButton>
          <SearchPill><svg width="10" height="10" viewBox="0 0 10 10" fill="none" stroke="#fff" strokeWidth="1.300"><circle cx="4" cy="4" r="3.200" /><path d="M6.500 6.500l3 3" /></svg>Pesquisar</SearchPill>
          <AppButton aria-label="Visual Studio Code"><svg width="16" height="16" viewBox="0 0 16 16"><path d="M11 0l5 2v12l-5 2-7-6.500L1.500 12 0 11l3-3-3-3 1.500-1L4 6.500zM11 4.500L6.500 8l4.500 3.500z" fill="#2a9fe6" /></svg></AppButton>
          <AppButton $run aria-label="Brave"><svg width="14" height="16" viewBox="0 0 14 16"><path d="M4 0h6l3 2-.5 3 .5 1-2 7-4 3-4-3-2-7 .5-1L1 2z" fill="#f1562b" /><path d="M3 4l4 .5L11 4l1 2-2.500 3 .5 2-3 2.500L4 11l.5-2L2 6z" fill="#fff" /><path d="M4 6.500l2 .8M10 6.500l-2 .8M7 8v3" stroke="#f1562b" /></svg></AppButton>
          <AppButton $run aria-label="Explorador de Arquivos"><svg width="17" height="15" viewBox="0 0 17 15"><path d="M0 1h6l2 2h8v5H0z" fill="#e8a317" /><path d="M0 5h17v9H0z" fill="#ffd35c" /><path d="M3 9h11v5H3z" fill="#2a86d1" /></svg></AppButton>
          <AppButton $run $active aria-label="SketchUp"><svg width="16" height="16" viewBox="0 0 16 16" fill="none"><path d="M0 0h16v16H0z" fill="#fff" /><path d="M3 5.500c2-4 8-4 10 0M3 8c1-4 9-4 10 0v2M5.500 8c1-2 5-2 5 0v5M3 5.500v5l4 3M5.500 9l2.500 1v3.500M13 10l-2 3" stroke="#1f6b9c" strokeWidth="1.200" /></svg></AppButton>
          <AppButton aria-label="Copilot"><svg width="16" height="15" viewBox="0 0 16 15"><path d="M5 0h5l-3 11H3C0 11 0 8 1 5S3 0 5 0z" fill="#2f9df0" /><path d="M1 6h4l-1 5C0 11 0 9 1 6z" fill="#f0c340" /><path d="M9 4h4c3 0 3 3 2 6s-2 5-4 5H6z" fill="#d85b9e" /><path d="M10 0c2 0 2 4 4 4H9L7 10 9 0z" fill="#6a5be8" /><path d="M6 15l1.500-5H11l-1 3c-1 2-2 2-4 2z" fill="#f47c50" /></svg></AppButton>
          <AppButton $run aria-label="AutoCAD"><svg width="14" height="16" viewBox="0 0 14 16"><path d="M0 0h14v16H0z" fill="#d0123f" /><path d="M0 11h14v5H0z" fill="#7a0a26" /><path d="M4.500 9L7 2.500 9.500 9M5.500 7h3" stroke="#fff" strokeWidth="1.300" fill="none" /><path d="M4 13.500h6" stroke="#fff" strokeWidth="1.500" strokeDasharray="1.500 .7" /></svg></AppButton>
          <AppButton $run aria-label="OBS Studio"><svg width="20" height="18" viewBox="0 0 20 18"><circle cx="9" cy="10" r="7.500" fill="#17171b" stroke="#b9bac4" /><path d="M9 9c-3 0-4-2-3-4M9 10c2-1 4 0 5 2M8 10c0 3-2 4-4 3" stroke="#d5d5dc" strokeWidth="1.400" fill="none" /><circle cx="15" cy="4" r="4" fill="#fb0d0d" /></svg></AppButton>
        </Apps>
        <SysTray>
          <svg width="14" height="8" viewBox="0 0 14 8" fill="none" stroke="#fff" strokeWidth="1.200"><path d="M1 5.500l3-3 3 3" /></svg>
          <svg width="13" height="13" viewBox="0 0 13 13" fill="none" stroke="#84c4f2"><path d="M5 1.500h3v6H5zM3 6c0 5 7 5 7 0M6.500 10v2.500" /></svg>
          <svg width="12" height="12" viewBox="0 0 12 12" fill="none" stroke="#dfe0f2"><path d="M8 1.500H1v7h9V6M4 11h4M8.500 1h3v3h-3zM10 4v3" /></svg>
          <svg width="12" height="12" viewBox="0 0 12 12" fill="none" stroke="#dfe0f2"><path d="M1 4.500h2l2.500-2v7L3 7.500H1zM7 4.500q1.200 1.500 0 3M8.500 3q2.500 3 0 6M10 2q3 4 0 8" /></svg>
          <Clock>13:38<br />12/10/2025</Clock>
        </SysTray>
      </TaskBar>

      <Handle href="#">
        <HandleBadge>
          <svg width="48" height="48" viewBox="0 0 48 48" fill="none" stroke="#fff"><rect x="3" y="3" width="42" height="42" rx="11" strokeWidth="5" /><circle cx="24" cy="24" r="10" strokeWidth="5" /><circle cx="36" cy="12" r="3" fill="#fff" stroke="none" /></svg>
        </HandleBadge>
        <HandleName>@pemattos.skp</HandleName>
      </Handle>
    </Shell>
  );
}
